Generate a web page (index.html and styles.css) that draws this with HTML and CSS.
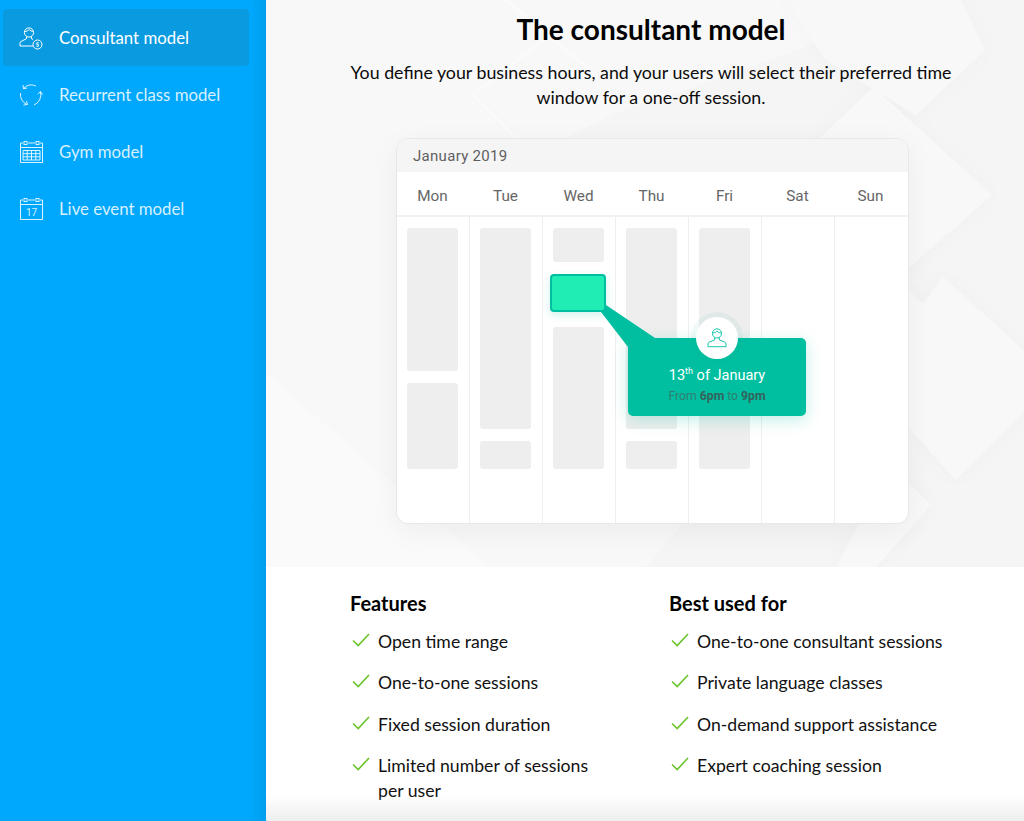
FILE: index.html
```html
<!DOCTYPE html>
<html lang="en">
<head>
  <meta charset="UTF-8" />
  <title>The consultant model</title>
  <link rel="stylesheet" href="styles.css">
</head>
<body>
  <nav class="sidebar">
    <a class="nav-item active">
      <svg class="nav-icon" viewBox="0 0 24 24" fill="none" stroke="currentColor" stroke-width="1">
        <circle cx="10" cy="6.5" r="4.6"/>
        <path d="M5.600 5.500c2-.2 3.600-.8 4.600-2 1 1.200 2.300 1.800 4.200 2"/>
        <path d="M7.500 10.500v2.200L2 15.500c-.8.400-1 1-1 1.800v2.700h13"/>
        <path d="M12.500 10.500v2.200l1.500.8"/>
        <circle cx="18.500" cy="18.500" r="4.500"/>
        <path d="M19.800 16.800h-2v1.700h1.500v1.800h-2" stroke-width=".9"/>
      </svg>
      <span>Consultant model</span>
    </a>
    <a class="nav-item">
      <svg class="nav-icon" viewBox="0 0 24 24" fill="none" stroke="currentColor" stroke-width="1">
        <path d="M4.500 5.500A11 11 0 0 1 17 3"/>
        <path d="M4 2L4.500 5.800L8 5"/>
        <path d="M21.500 9A11 11 0 0 1 15 22"/>
        <path d="M18.800 11L21.500 8.500L23.500 11.500"/>
        <path d="M1.500 10A11 11 0 0 0 8 21.500"/>
        <path d="M4.500 22L8.500 21.500L7.500 18"/>
      </svg>
      <span>Recurrent class model</span>
    </a>
    <a class="nav-item">
      <svg class="nav-icon" viewBox="0 0 24 24" fill="none" stroke="currentColor" stroke-width="1">
        <path d="M4 3H1.500v19.500h22V3H21M9 3h7"/>
        <rect x="5" y="1.500" width="3" height="3"/>
        <rect x="17" y="1.500" width="3" height="3"/>
        <path d="M1.500 7.500h22M4 10.500h17v9.500H4zM4 13.700h17M4 16.800h17M8.200 10.500V20M12.500 10.500V20M16.800 10.500V20"/>
      </svg>
      <span>Gym model</span>
    </a>
    <a class="nav-item">
      <svg class="nav-icon" viewBox="0 0 24 24" fill="none" stroke="currentColor" stroke-width="1">
        <path d="M4 3H1.500v19.500h22V3H21M9 3h7"/>
        <rect x="5" y="1.500" width="3" height="3"/>
        <rect x="17" y="1.500" width="3" height="3"/>
        <path d="M1.500 7.500h22"/>
        <text x="12.500" y="19" text-anchor="middle" class="nav-icon-day">17</text>
      </svg>
      <span>Live event model</span>
    </a>
  </nav>

  <main class="main">
    <section class="hero">
      <!-- background diamonds -->
      <svg class="hero-bg" viewBox="0 0 758 567">
        <defs>
          <filter id="soft" x="-20%" y="-20%" width="140%" height="140%">
            <feDropShadow dx="0" dy="0" stdDeviation="9" flood-color="#000" flood-opacity="0.02"/>
          </filter>
        </defs>
        <path fill="#fafafa" d="M0 373L224 567H0Z"/>
        <path fill="#f5f5f6" d="M300 138L350 113L420 90L560 40L666 0H758V567H380L420 520H640V138Z"/>
        <g fill="#f8f8f9" filter="url(#soft)">
          <path d="M666 -60L719 50L650 115L560 60L520 0Z"/>
          <path d="M607 87L726 195L640 270L500 190Z"/>
          <path d="M677 277L790 380L690 480L600 380Z"/>
          <path d="M642 290L682 327L642 360L600 327Z"/>
          <path d="M625 467L665 505L610 567L570 567L600 510Z"/>
        </g>
        <path fill="#f5f5f5" d="M350 113L325 138H376Z"/>
        <path fill="none" stroke="#fbfbfb" stroke-width="2" d="M240 0L330 75M207 95L290 30M207 95L250 138"/>
      </svg>
      <div class="hero-inner">
        <h1>The consultant model</h1>
        <p class="lead">You define your business hours, and your users will select their preferred time window for a one-off session.</p>
        <div class="calendar">
          <div class="cal-month">January 2019</div>
          <div class="cal-days">
            <span>Mon</span><span>Tue</span><span>Wed</span><span>Thu</span><span>Fri</span><span>Sat</span><span>Sun</span>
          </div>
          <div class="cal-grid">
            <div class="cal-col">
              <div class="slot h143"></div>
              <div class="slot h86"></div>
            </div>
            <div class="cal-col">
              <div class="slot h201"></div>
              <div class="slot h28"></div>
            </div>
            <div class="cal-col">
              <div class="slot h34"></div>
              <div class="slot selected"></div>
              <div class="slot grow"></div>
            </div>
            <div class="cal-col">
              <div class="slot h201"></div>
              <div class="slot h28"></div>
            </div>
            <div class="cal-col">
              <div class="slot grow"></div>
            </div>
            <div class="cal-col"></div>
            <div class="cal-col"></div>
          </div>
          <svg class="popup-tail" viewBox="0 0 60 52"><path d="M3 12L8 5L57 38V50H30V47Z"/></svg>
          <div class="popup">
            <div class="popup-avatar">
              <svg viewBox="0 0 24 24" fill="none" stroke="#00bfa0" stroke-width="1">
                <circle cx="12" cy="7" r="5"/>
                <path d="M7.200 6.500c2.300 0 3.800-.7 4.800-2 1 1.300 2.500 2 4.800 2"/>
                <path d="M9.500 11.500v2.500L3.500 16.500c-.9.400-1.300 1-1.300 2v3h19.600v-3c0-1-.4-1.600-1.300-2L14.500 14v-2.500"/>
              </svg>
            </div>
            <div class="popup-date">13<sup>th</sup> of January</div>
            <div class="popup-time">From <b>6pm</b> to <b>9pm</b></div>
          </div>
        </div>
      </div>
    </section>

    <section class="details">
      <div class="details-col features">
        <h2>Features</h2>
        <ul>
          <li><svg class="check" viewBox="0 0 18 14"><path d="M1 7.500L6.200 12.500L17 1"/></svg><span>Open time range</span></li>
          <li><svg class="check" viewBox="0 0 18 14"><path d="M1 7.500L6.200 12.500L17 1"/></svg><span>One-to-one sessions</span></li>
          <li><svg class="check" viewBox="0 0 18 14"><path d="M1 7.500L6.200 12.500L17 1"/></svg><span>Fixed session duration</span></li>
          <li><svg class="check" viewBox="0 0 18 14"><path d="M1 7.500L6.200 12.500L17 1"/></svg><span>Limited number of sessions per user</span></li>
        </ul>
      </div>
      <div class="details-col">
        <h2>Best used for</h2>
        <ul>
          <li><svg class="check" viewBox="0 0 18 14"><path d="M1 7.500L6.200 12.500L17 1"/></svg><span>One-to-one consultant sessions</span></li>
          <li><svg class="check" viewBox="0 0 18 14"><path d="M1 7.500L6.200 12.500L17 1"/></svg><span>Private language classes</span></li>
          <li><svg class="check" viewBox="0 0 18 14"><path d="M1 7.500L6.200 12.500L17 1"/></svg><span>On-demand support assistance</span></li>
          <li><svg class="check" viewBox="0 0 18 14"><path d="M1 7.500L6.200 12.500L17 1"/></svg><span>Expert coaching session</span></li>
        </ul>
      </div>
    </section>
    <div class="bottom-fade"></div>
  </main>
</body>
</html>
```

FILE: styles.css
```css
* {
  box-sizing: border-box;
}

body {
  margin: 0;
  display: flex;
  height: 821px;
  overflow: hidden;
  font-family: "Lato", sans-serif;
  color: #0b0b0b;
  background: #fff;
}

/* Sidebar */
.sidebar {
  width: 266px;
  flex-shrink: 0;
  padding: 9px 17px 0 3px;
  background: linear-gradient(to right, #00a8fd 94%, #019fed);
}

.nav-item {
  display: flex;
  align-items: center;
  height: 57px;
  padding-left: 16px;
  border-radius: 4px;
  color: rgba(255, 255, 255, 0.85);
  font-size: 16.800px;
}

.nav-item.active {
  background: #0a9ae0;
  color: #fff;
}

.nav-icon {
  width: 24px;
  height: 24px;
  margin-right: 16px;
  flex-shrink: 0;
}

.nav-icon-day {
  font-family: "Roboto", sans-serif;
  font-size: 10px;
  fill: currentColor;
  stroke: none;
}

/* Hero */
.main {
  position: relative;
  flex: 1;
  min-width: 0;
}

.hero {
  position: relative;
  height: 567px;
  background: #f8f8f8;
  overflow: hidden;
}

.hero-bg {
  position: absolute;
  top: 0;
  left: 0;
  width: 100%;
  height: 100%;
}

.hero-inner {
  position: relative;
  width: 640px;
  margin-left: 65px;
  text-align: center;
}

h1 {
  margin: 0;
  padding-top: 11px;
  font-size: 28px;
  line-height: 37px;
  font-weight: 700;
  color: #000;
}

.lead {
  margin: 12px auto 0;
  width: 620px;
  font-size: 17.780px;
  line-height: 25px;
  color: #0b0b0b;
}

/* Calendar card */
.calendar {
  position: relative;
  width: 513px;
  height: 386px;
  margin: 28px 0 0 65px;
  background: #fff;
  border: 1px solid #e8e8e8;
  border-radius: 12px;
  box-shadow: 0 8px 30px rgba(0, 0, 0, 0.05);
  font-family: "Roboto", sans-serif;
  text-align: left;
}

.cal-month {
  height: 33px;
  padding-left: 16px;
  background: #f5f5f5;
  border-radius: 11px 11px 0 0;
  font-size: 15px;
  line-height: 34px;
  letter-spacing: 0.3px;
  color: #5f5f5f;
}

.cal-days {
  display: grid;
  grid-template-columns: repeat(7, 1fr);
  height: 45px;
  border-bottom: 2px solid #f1f1f1;
}

.cal-days span {
  padding: 2px 2px 0 0;
  text-align: center;
  font-size: 15.300px;
  line-height: 44px;
  color: #666;
}

.cal-grid {
  display: grid;
  grid-template-columns: repeat(7, 1fr);
  height: 306px;
}

.cal-col {
  display: flex;
  flex-direction: column;
  gap: 12px;
  padding: 11px 11px 54px 10px;
  border-right: 1.500px solid #eeeeee;
}

.cal-col:last-child {
  border-right: none;
}

.slot {
  background: #eeeeee;
  border-radius: 3px;
}

.h143 { height: 143px; }
.h86 { height: 86px; }
.h201 { height: 201px; }
.h28 { height: 28px; }
.h34 { height: 34px; }

.grow {
  flex: 1;
}

.slot.selected {
  height: 38px;
  flex-shrink: 0;
  margin: 0 -2px 3px -3px;
  background: #20edb4;
  border: 2px solid #00bfa0;
  border-radius: 4px;
  box-shadow: 0 3px 8px rgba(0, 191, 160, 0.2);
  z-index: 1;
}

/* Popup over the calendar */
.popup-tail {
  position: absolute;
  left: 201px;
  top: 161px;
  width: 60px;
  height: 52px;
  fill: #00bfa0;
}

.popup {
  position: absolute;
  left: 231px;
  top: 199px;
  width: 178px;
  height: 78px;
  padding-top: 29px;
  background: #00bfa0;
  border-radius: 5px;
  box-shadow: 0 4px 16px rgba(0, 191, 160, 0.25);
  text-align: center;
  color: #fff;
}

.popup-avatar {
  position: absolute;
  left: 68px;
  top: -21px;
  width: 42px;
  height: 42px;
  padding: 10px;
  background: #fff;
  border-radius: 50%;
  box-shadow: 0 0 0 5px rgba(0, 150, 130, 0.05);
}

.popup-avatar svg {
  display: block;
  width: 22px;
  height: 22px;
}

.popup-date {
  font-size: 14.500px;
  line-height: 18px;
}

.popup-date sup {
  font-size: 9px;
  line-height: 0;
}

.popup-time {
  margin-top: 4px;
  font-size: 12.200px;
  line-height: 14px;
  color: #2f7f72;
}

.popup-time b {
  font-weight: 700;
  color: #35635c;
}

/* Lists */
.details {
  display: flex;
  padding: 24px 0 0 84px;
}

.details-col {
  width: 319px;
}

.features {
  padding-right: 60px;
}

h2 {
  margin: 0;
  font-size: 20px;
  line-height: 25px;
  font-weight: 700;
  color: #000;
}

ul {
  list-style: none;
  margin: 13px 0 0;
  padding: 0;
}

li {
  display: flex;
  align-items: flex-start;
  margin-bottom: 16.300px;
  font-size: 17.650px;
  line-height: 25px;
  color: #111;
}

.check {
  width: 18px;
  height: 14px;
  margin: 4px 8px 0 2px;
  flex-shrink: 0;
  fill: none;
  stroke: #6ac42a;
  stroke-width: 1.600;
}

.bottom-fade {
  position: absolute;
  left: 0;
  right: 0;
  bottom: 0;
  height: 26px;
  background: linear-gradient(to bottom, rgba(238, 238, 238, 0), #eeeeee);
}
```
